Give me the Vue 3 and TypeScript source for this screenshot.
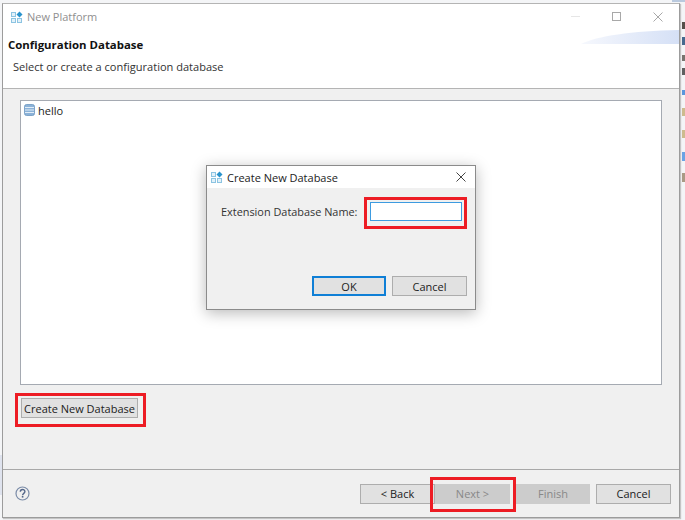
<script setup lang="ts">
const footer = [
  { label: '< Back', cls: 'tight' },
  { label: 'Next >', cls: 'off' },
  { label: 'Finish', cls: 'off narrow' },
  { label: 'Cancel', cls: '' },
]
const scraps = [
  { left: 672, width: 13, top: 0, h: 2, color: '#b9c9de' },
  { left: 682, width: 3, top: 22, h: 7, color: '#55504a' },
  { left: 682, width: 3, top: 37, h: 8, color: '#46698e' },
  { left: 682, width: 3, top: 55, h: 6, color: '#77746f' },
  { left: 682, width: 3, top: 68, h: 7, color: '#5f5f5f' },
  { left: 682, width: 3, top: 90, h: 5, color: '#5a96dc' },
  { left: 682, width: 3, top: 108, h: 8, color: '#cdbb8e' },
  { left: 682, width: 3, top: 130, h: 8, color: '#cdbb8e' },
  { left: 682, width: 3, top: 152, h: 9, color: '#6aa3e4' },
  { left: 682, width: 3, top: 173, h: 9, color: '#a99a85' },
  { left: 0, width: 2, top: 455, h: 40, color: '#dfe3ee' },
]
</script>

<template>
  <div class="desk">
    <span v-for="s in scraps" :key="s.top" class="scrap" :style="{ left: s.left + 'px', width: s.width + 'px', top: s.top + 'px', height: s.h + 'px', background: s.color }"></span>
    <div class="win">
      <header class="head">
        <div class="titlebar">
          <svg class="logo" width="12" height="12" viewBox="0 0 12 12">
            <rect x="0.5" y="1.5" width="4" height="4" fill="#e3f1f9" stroke="#8cc4e2" />
            <path d="M8.5 0.5l3 3-3 3-3-3z" fill="#2a93cc" />
            <rect x="0.5" y="7.5" width="4" height="4" fill="#e3f1f9" stroke="#8cc4e2" />
            <rect x="6.5" y="7.5" width="4" height="4" fill="#e3f1f9" stroke="#8cc4e2" />
          </svg>
          <span class="wintitle">New Platform</span>
          <div class="controls">
            <span class="minbar"></span>
            <svg width="9" height="9" viewBox="0 0 9 9"><rect x="0.5" y="0.5" width="8" height="8" fill="none" stroke="#a8a8a8" /></svg>
            <svg width="10" height="10" viewBox="0 0 10 10"><path d="M0.5 0.5l9 9M9.5 0.5l-9 9" stroke="#a8a8a8" fill="none" /></svg>
          </div>
        </div>
        <h1 class="pagetitle">Configuration Database</h1>
        <p class="pagesub">Select or create a configuration database</p>
        <svg class="swoosh" width="98" height="14" viewBox="0 0 98 14">
          <defs>
            <linearGradient id="sw" x1="0" x2="1" y1="0" y2="0">
              <stop offset="0" stop-color="#f6f8fd" />
              <stop offset="1" stop-color="#d5e0f6" />
            </linearGradient>
          </defs>
          <path d="M0 14C16 6 50 1 98 0V14Z" fill="url(#sw)" />
        </svg>
      </header>

      <main class="body">
        <div class="list">
          <div class="row">
            <svg width="11" height="12" viewBox="0 0 11 12">
              <rect x="0.5" y="0.5" width="10" height="11" rx="2" fill="#8bb2d8" stroke="#6c97c0" stroke-width="0.8" />
              <path d="M1 3.5h9M1 6h9M1 8.5h9" stroke="#e2edf7" />
            </svg>
            <span>hello</span>
          </div>
        </div>
        <div class="actions">
          <button class="btn create">Create New Database</button>
        </div>
      </main>

      <footer class="foot">
        <svg class="help" width="15" height="15" viewBox="0 0 15 15">
          <circle cx="7.5" cy="7.5" r="6.5" fill="none" stroke="#7b8ca8" stroke-width="1.2" />
          <path d="M5.3 5.8c0-3 4.6-3 4.6-.2 0 1.8-2.3 1.8-2.3 3.7" fill="none" stroke="#54678a" stroke-width="1.4" />
          <rect x="6.8" y="10" width="1.6" height="1.6" fill="#54678a" />
        </svg>
        <div class="btns">
          <button v-for="b in footer" :key="b.label" class="btn fbtn" :class="b.cls">{{ b.label }}</button>
        </div>
      </footer>
    </div>

    <section class="dialog">
      <div class="dtitle">
        <svg width="12" height="12" viewBox="0 0 12 12">
          <rect x="0.5" y="1.5" width="4" height="4" fill="#e3f1f9" stroke="#8cc4e2" />
          <path d="M8.5 0.5l3 3-3 3-3-3z" fill="#2a93cc" />
          <rect x="0.5" y="7.5" width="4" height="4" fill="#e3f1f9" stroke="#8cc4e2" />
          <rect x="6.5" y="7.5" width="4" height="4" fill="#e3f1f9" stroke="#8cc4e2" />
        </svg>
        <span>Create New Database</span>
        <svg class="dclose" width="10" height="10" viewBox="0 0 10 10"><path d="M0.5 0.5l9 9M9.5 0.5l-9 9" stroke="#444" fill="none" /></svg>
      </div>
      <div class="dbody">
        <div class="field">
          <label>Extension Database Name:</label>
          <div class="input"></div>
        </div>
        <div class="dbtns">
          <button class="btn dbtn primary">OK</button>
          <button class="btn dbtn">Cancel</button>
        </div>
      </div>
    </section>

    <div class="mark m1"></div>
    <div class="mark m2"></div>
    <div class="mark m3"></div>
  </div>
</template>

<style>
html, body { margin: 0; background: #f4f5f7; }
</style>

<style scoped>
.desk {
  position: relative;
  width: 685px;
  height: 520px;
  overflow: hidden;
  padding: 3px 5px 2px 2px;
  box-sizing: border-box;
  background: #f4f5f7;
  font-family: "Open Sans", "Noto Sans", sans-serif;
  font-size: 11px;
  color: #222;
}
.scrap { position: absolute; }
.win {
  position: relative;
  height: 100%;
  box-sizing: border-box;
  display: flex;
  flex-direction: column;
  background: #f0f0f0;
  border: 1px solid #9c9c9c;
  border-top-color: #b4b4b4;
  box-shadow: 1px 1px 1px #c4c4c4;
}
.head {
  position: relative;
  height: 84px;
  flex: none;
  background: #fff;
  border-bottom: 1px solid #b4b4b4;
}
.titlebar {
  height: 25px;
  display: flex;
  align-items: center;
  padding-left: 8px;
  gap: 4px;
}
.wintitle { color: #8f8f8f; font-size: 11px; }
.controls {
  margin-left: auto;
  display: flex;
  align-items: center;
  gap: 32px;
  padding-right: 16px;
}
.minbar { width: 9px; height: 1px; background: #e6e6e6; }
.pagetitle {
  margin: 8px 0 0 5px;
  font-size: 11.4px;
  line-height: 16px;
  font-weight: 700;
  color: #111;
}
.pagesub {
  margin: 6px 0 0 10px;
  font-size: 11.05px;
  line-height: 15px;
  color: #333;
}
.swoosh {
  position: absolute;
  right: 0;
  top: 26px;
}
.body {
  flex: 1;
  display: flex;
  flex-direction: column;
  padding: 11px 17px 0 17px;
}
.list {
  height: 285px;
  box-sizing: border-box;
  background: #fff;
  border: 1px solid #a5aab2;
  padding: 2px 3px;
}
.row { display: flex; align-items: center; gap: 3px; height: 14px; color: #222; }
.actions { padding: 13px 0 0 1px; }
.btn {
  display: block;
  box-sizing: border-box;
  background: #e1e1e1;
  border: 1px solid #adadad;
  font: inherit;
  color: #222;
  padding: 0;
}
.create { width: 117px; height: 20px; }
.foot {
  height: 47px;
  flex: none;
  display: flex;
  align-items: center;
  justify-content: space-between;
  padding: 0 8px 0 12px;
  border-top: 1px solid #a8a8a8;
}
.btns { display: flex; gap: 6px; }
.fbtn { width: 75px; height: 20px; }
.fbtn.tight { margin-right: -6px; }
.fbtn.narrow { width: 74px; }
.fbtn.off { background: #cccccc; border-color: #cccccc; color: #888; }
.dialog {
  position: absolute;
  left: 206px;
  top: 165px;
  width: 270px;
  height: 145px;
  box-sizing: border-box;
  background: #f0f0f0;
  border: 1px solid #8b8b8b;
  box-shadow: 0 3px 14px rgba(0, 0, 0, 0.28);
  display: flex;
  flex-direction: column;
}
.dtitle {
  height: 22px;
  flex: none;
  background: #fff;
  display: flex;
  align-items: center;
  gap: 4px;
  padding-left: 4px;
  color: #222;
}
.dclose { margin-left: auto; margin-right: 9px; }
.dbody {
  flex: 1;
  display: flex;
  flex-direction: column;
  justify-content: space-between;
  padding: 14px 8px 13px 14px;
}
.field { display: flex; align-items: center; gap: 13px; }
.field label { color: #333; font-size: 10.9px; }
.input {
  width: 92px;
  height: 19px;
  box-sizing: border-box;
  background: #fff;
  border: 1px solid #3d9be0;
}
.dbtns { display: flex; justify-content: flex-end; gap: 6px; }
.dbtn { width: 75px; height: 20px; }
.primary { width: 74px; border-color: #0f7fd6; border-width: 2px; }
.mark {
  position: absolute;
  box-sizing: border-box;
  border: 3px solid #ed1c24;
  pointer-events: none;
}
.m1 { left: 364px; top: 197px; width: 103px; height: 32px; }
.m2 { left: 15px; top: 393px; width: 131px; height: 34px; }
.m3 { left: 430px; top: 477px; width: 86px; height: 35px; }
</style>
